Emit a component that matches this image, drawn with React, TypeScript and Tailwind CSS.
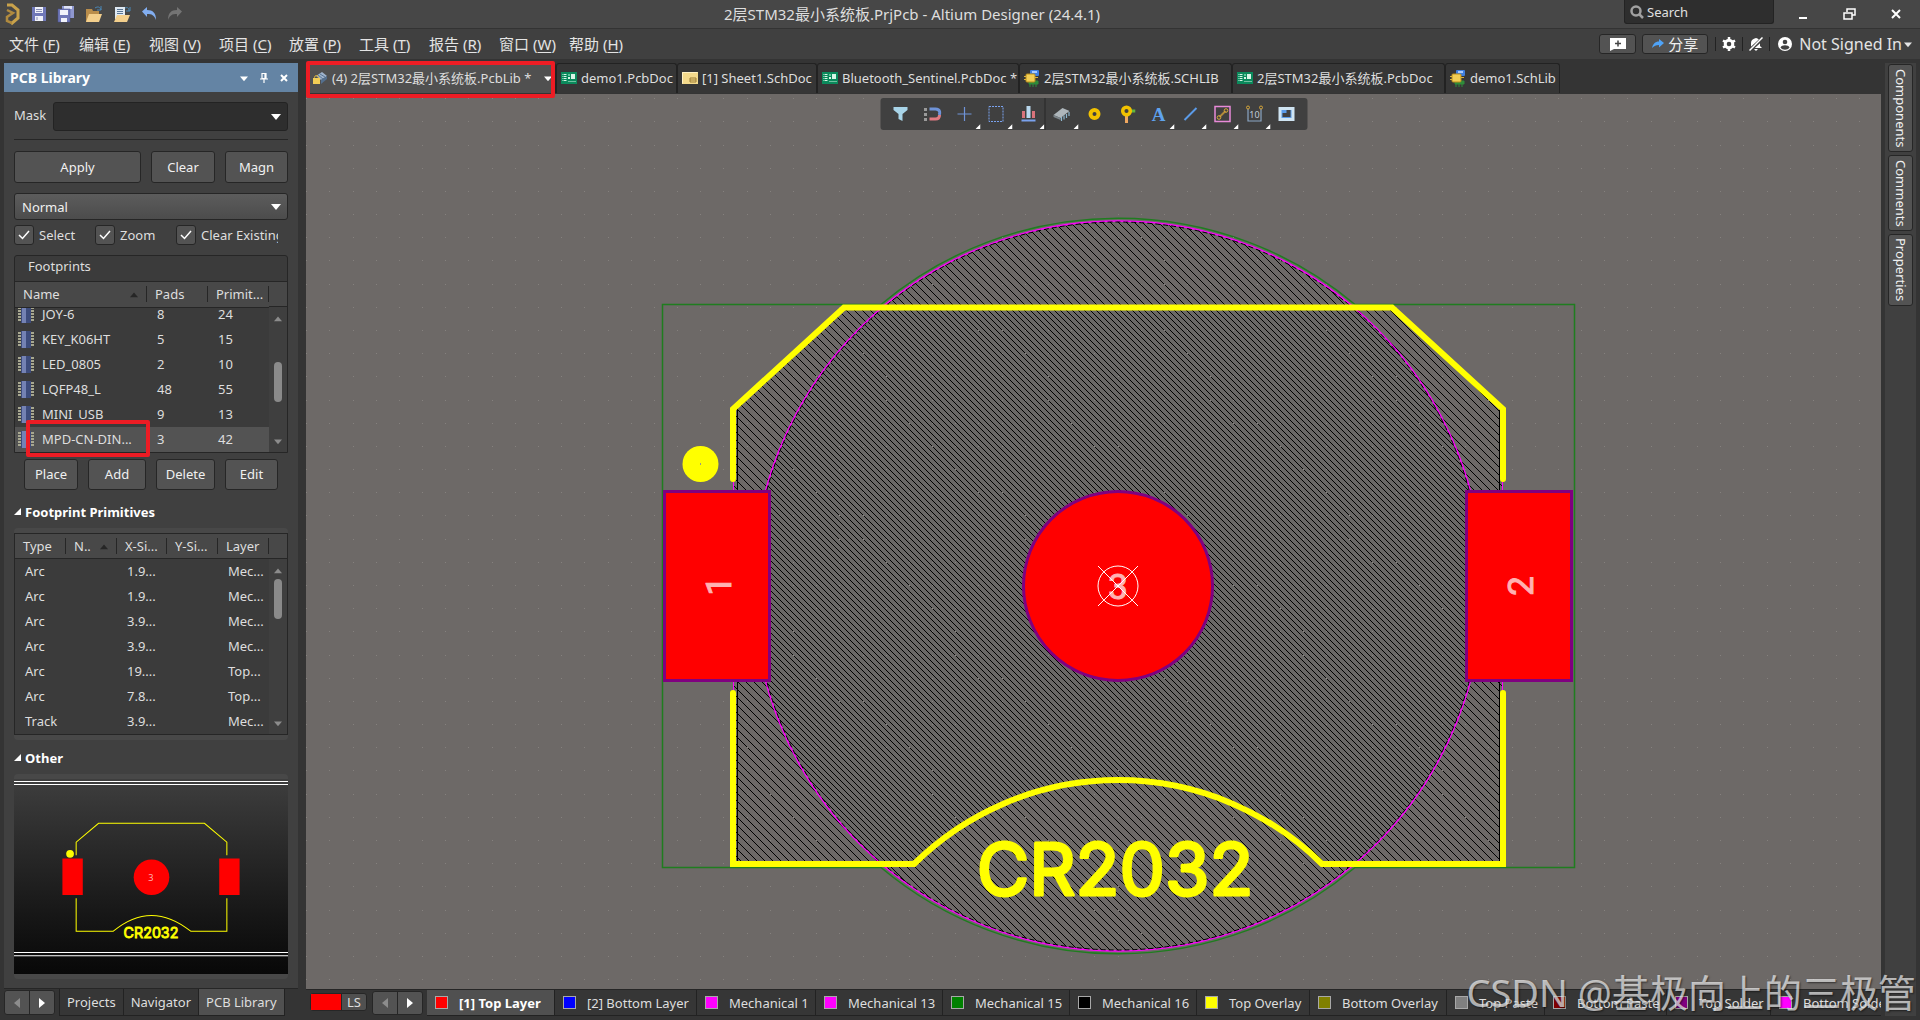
import type { ReactNode } from 'react';
import clsx from 'clsx';

const menus = [
  ['文件', 'F'],
  ['编辑', 'E'],
  ['视图', 'V'],
  ['项目', 'C'],
  ['放置', 'P'],
  ['工具', 'T'],
  ['报告', 'R'],
  ['窗口', 'W'],
  ['帮助', 'H'],
];

const docs = [
  { label: '(4) 2层STM32最小系统板.PcbLib *', kind: 'pcblib', width: 'w-[249px]', active: true },
  { label: 'demo1.PcbDoc', kind: 'pcb', width: 'w-[121px]' },
  { label: '[1] Sheet1.SchDoc', kind: 'sch', width: 'w-[140px]' },
  { label: 'Bluetooth_Sentinel.PcbDoc *', kind: 'pcb', width: 'w-[202px]' },
  { label: '2层STM32最小系统板.SCHLIB', kind: 'schlib', width: 'w-[213px]' },
  { label: '2层STM32最小系统板.PcbDoc', kind: 'pcb', width: 'w-[213px]' },
  { label: 'demo1.SchLib', kind: 'schlib', width: 'w-[115px]' },
];

const footprints = [
  { name: 'JOY-6', pads: 8, primitives: 24 },
  { name: 'KEY_K06HT', pads: 5, primitives: 15 },
  { name: 'LED_0805', pads: 2, primitives: 10 },
  { name: 'LQFP48_L', pads: 48, primitives: 55 },
  { name: 'MINI_USB', pads: 9, primitives: 13 },
  { name: 'MPD-CN-DIN...', pads: 3, primitives: 42 },
];

const primitives = [
  ['Arc', '1.9...', 'Mec...'],
  ['Arc', '1.9...', 'Mec...'],
  ['Arc', '3.9...', 'Mec...'],
  ['Arc', '3.9...', 'Mec...'],
  ['Arc', '19....', 'Top...'],
  ['Arc', '7.8...', 'Top...'],
  ['Track', '3.9...', 'Mec...'],
];

const layers = [
  { label: '[1] Top Layer', color: 'bg-[#ff0000]', width: 'w-[128px]', active: true },
  { label: '[2] Bottom Layer', color: 'bg-[#0000ff]', width: 'w-[142px]' },
  { label: 'Mechanical 1', color: 'bg-[#ff00ff]', width: 'w-[119px]' },
  { label: 'Mechanical 13', color: 'bg-[#ff00ff]', width: 'w-[127px]' },
  { label: 'Mechanical 15', color: 'bg-[#008000]', width: 'w-[127px]' },
  { label: 'Mechanical 16', color: 'bg-black', width: 'w-[127px]' },
  { label: 'Top Overlay', color: 'bg-[#ffff00]', width: 'w-[113px]' },
  { label: 'Bottom Overlay', color: 'bg-[#808000]', width: 'w-[137px]' },
  { label: 'Top Paste', color: 'bg-[#808080]', width: 'w-[98px]' },
  { label: 'Bottom Paste', color: 'bg-[#800000]', width: 'w-[122px]' },
  { label: 'Top Solder', color: 'bg-[#800080]', width: 'w-[104px]' },
  { label: 'Bottom Solder', color: 'bg-[#ff00ff]', width: 'w-[128px]' },
];

const buttonStyle = 'rounded-[3px] border border-[#262626] bg-[#535353] text-[#f0f0f0]';

function Triangle({ dir, className }: { dir: 'up' | 'down' | 'left' | 'right' | 'corner'; className?: string }) {
  const points = {
    up: '0,9 5,3 10,9',
    down: '0,3 10,3 5,9',
    left: '8,0 8,10 2,5',
    right: '2,0 2,10 8,5',
    corner: '10,0 10,10 0,10',
  }[dir];
  return (
    <svg viewBox="0 0 10 10" className={clsx('shrink-0', className)} fill="currentColor">
      <polygon points={points} />
    </svg>
  );
}

function DocIcon({ kind }: { kind: string }) {
  if (kind === 'pcb') {
    return (
      <svg viewBox="0 0 16 12" className="h-3 w-4 shrink-0">
        <rect width="16" height="12" fill="#0b8a5c" />
        <path d="M1.500 2.500h4M1.500 4.500h4M1.500 6.500h4M1.500 8.500h4" stroke="#d8f5e6" strokeDasharray="1 .5 2.500 9" />
        <path d="M7.500 9.500h7" stroke="#d8f5e6" strokeDasharray="1 1" />
        <rect x="10" y="2" width="4" height="5" fill="#d8f5e6" />
        <rect x="7" y="2" width="2" height="2" fill="#5fc79b" />
        <rect x="7" y="5" width="2" height="2" fill="#d8f5e6" />
      </svg>
    );
  }
  if (kind === 'sch') {
    return (
      <svg viewBox="0 0 16 12" className="h-3 w-4 shrink-0">
        <rect width="16" height="12" fill="#f3d98b" />
        <path d="M.5 11.500V.5h15" stroke="#fff1c4" fill="none" />
        <path d="M8 6h6v4H8zM8 8h6" stroke="#9b7d35" fill="none" />
      </svg>
    );
  }
  if (kind === 'schlib') {
    return (
      <svg viewBox="0 0 16 18" className="h-[18px] w-4 shrink-0">
        <rect x="6" y="1" width="9" height="6" rx="1" fill="#3f7fe0" />
        <rect x="8" y="2" width="5" height="2" fill="#a9cbff" />
        <path d="M5 12h9v3H5zM6 15v3M9 15v3M12 15v3" fill="#2e8b3a" stroke="#2e8b3a" />
        <rect x="2" y="5" width="9" height="8" rx="1" fill="#f2ce55" stroke="#b98d1b" />
        <path d="M0 7.500h2M0 10.500h2M11 8.500h3" stroke="#d9b13a" />
      </svg>
    );
  }
  return (
    <svg viewBox="0 0 16 14" className="h-[14px] w-4 shrink-0">
      <path d="M4 5l6-4 5 4-6 4z" fill="#9fb4cd" />
      <path d="M9 9l6-4v3l-6 5z" fill="#54708f" />
      <path d="M6 4l5 4M8 3l5 3" stroke="#5a7694" />
      <path d="M2.500 8V6.500a2 2 0 014 0V8" stroke="#d9b13a" fill="none" />
      <rect x="1" y="7" width="7" height="6" fill="#f2ce55" />
    </svg>
  );
}

function TitleBar() {
  return (
    <header className="relative flex h-[29px] shrink-0 items-center justify-between border-b border-[#333] bg-[#474747]">
      <div className="flex items-center gap-[10px] pl-[5px]">
        <svg viewBox="0 0 16 24" className="h-6 w-4" fill="none" stroke="#c9a24b" strokeWidth="3">
          <path d="M2 3h5l6 5v8l-7 6" />
          <path d="M2 8l6 3-6 4v4l5 2" stroke="#b08a3f" strokeWidth="2.500" />
        </svg>
        <svg viewBox="0 0 16 16" className="size-4">
          <path d="M1 1h14v14H1z" fill="#7078b8" />
          <path d="M4 1h8v6H4zM4 10h8v5H4z" fill="#f0f2fa" />
          <path d="M5 3.500h6M5 5.500h6M6 11v3" stroke="#8a90b8" />
        </svg>
        <svg viewBox="0 0 18 18" className="size-[18px]">
          <path d="M5 1h12v12H5z" fill="#8f97cf" />
          <path d="M7 1h8v3H7z" fill="#dfe3f7" />
          <path d="M1 4h12v13H1z" fill="#7078b8" stroke="#4b5190" strokeWidth=".5" />
          <path d="M3 5h8v5H3zM4 13h6v4H4z" fill="#f0f2fa" />
        </svg>
        <svg viewBox="0 0 18 18" className="size-[18px]">
          <path d="M1 4h6l1 2h6v11H1z" fill="#b98d4b" />
          <path d="M4 9h13l-3 8H1z" fill="#f3cf8c" />
          <path d="M10 3c3-2 5-1 6 2M16 1v4h-4" fill="none" stroke="#4b87b5" />
        </svg>
        <svg viewBox="0 0 18 18" className="size-[18px]">
          <path d="M2 2h10v12H2z" fill="#dfe9f3" />
          <path d="M4 4.500h6M4 6.500h6M4 8.500h6" stroke="#5a7694" />
          <path d="M4 10h13l-3 7H1z" fill="#f3cf8c" />
          <path d="M12 3c3-1 4 0 4 3M17 2v4h-4" fill="none" stroke="#4b87b5" />
        </svg>
        <svg viewBox="0 0 16 16" className="size-4">
          <path d="M1 5.500L6 1v3c6 0 9 3 9 10-2-5-4-6-9-6v3z" fill="#82aef0" />
        </svg>
        <svg viewBox="0 0 16 16" className="size-4">
          <path d="M15 5.500L10 1v3c-6 0-9 3-9 10 2-5 4-6 9-6v3z" fill="#747474" />
        </svg>
      </div>
      <h1 className="absolute inset-x-0 text-center text-[15px] leading-7 text-[#dedede]">
        <span className="pr-[96px]">2层STM32最小系统板.PrjPcb - Altium Designer (24.4.1)</span>
      </h1>
      <div className="relative flex h-full items-start">
        <label className="flex h-6 w-[150px] items-center gap-[2px] rounded-b-[3px] border border-t-0 border-[#232323] bg-[#2e2e2e] pl-1">
          <svg viewBox="0 0 16 16" className="size-4 shrink-0" fill="none" stroke="#a0a0a0" strokeWidth="2.500">
            <circle cx="7" cy="7" r="4.500" />
            <path d="M10 10l4 4" />
          </svg>
          <input type="search" aria-label="Search" placeholder="Search" className="w-full bg-transparent text-[13px] outline-none placeholder:text-[#e0e0e0]" />
        </label>
        <div className="flex h-full w-[146px] items-center justify-between pr-[19px] pl-[25px] text-white">
          <button aria-label="Minimize" className="h-[9px] w-2 border-b-2 border-white" />
          <button aria-label="Restore">
            <svg viewBox="0 0 13 12" className="h-3 w-[13px]" fill="none" stroke="currentColor" strokeWidth="1.500">
              <path d="M4 4V1h8v6H9" />
              <path d="M1 5h8v6H1z" />
            </svg>
          </button>
          <button aria-label="Close">
            <svg viewBox="0 0 10 10" className="size-[10px]" stroke="currentColor" strokeWidth="2">
              <path d="M1 1l8 8M9 1L1 9" />
            </svg>
          </button>
        </div>
      </div>
    </header>
  );
}

function MenuBar() {
  return (
    <nav className="flex h-[30px] shrink-0 items-center justify-between bg-[#404040] pl-[9px] text-[15px] text-[#e4e4e4]">
      <div className="flex">
        {menus.map(([label, key]) => (
          <button key={key} className="w-[70px] text-left whitespace-nowrap">
            {label} (<u className="underline-offset-2">{key}</u>)
          </button>
        ))}
      </div>
      <div className="flex items-center pr-2">
        <button aria-label="Comment" className={clsx(buttonStyle, 'mr-[6px] flex h-5 w-[37px] items-center justify-center')}>
          <svg viewBox="0 0 16 14" className="h-[14px] w-4">
            <path d="M0 1h16v11H4l-4 2z" fill="#fff" />
            <path d="M8 3.500v6M5 6.500h6" stroke="#444" strokeWidth="1.500" />
          </svg>
        </button>
        <button className={clsx(buttonStyle, 'flex h-5 w-[66px] items-center justify-center gap-1 leading-5')}>
          <svg viewBox="0 0 12 10" className="h-[10px] w-3">
            <path d="M12 4L7 0v2.500C3 2.500 1 5 0 9c2-2 4-3 7-3v2.500z" fill="#4fa3f7" />
          </svg>
          分享
        </button>
        <span className="ml-[7px] h-[14px] w-px bg-[#222]" />
        <button aria-label="Settings" className="px-[6px]">
          <svg viewBox="0 0 14 14" className="size-[14px]" fill="none" stroke="#fff">
            <circle cx="7" cy="7" r="3.800" strokeWidth="3" />
            <path d="M7 0v2.500M7 11.500V14M1 3.500l2.200 1.300M10.800 9.200L13 10.500M1 10.500l2.200-1.300M10.800 4.800L13 3.500" strokeWidth="2.500" />
          </svg>
        </button>
        <span className="h-[14px] w-px bg-[#222]" />
        <button aria-label="Notifications" className="px-[6px]">
          <svg viewBox="0 0 14 14" className="size-[14px]">
            <path d="M2 11V6c0-3 2-4 5-5 2 .5 4 2 4 4v4l2 2H2zM5 12h4l-2 2z" fill="#fff" />
            <path d="M0 14L14 1" stroke="#404040" strokeWidth="3.500" />
            <path d="M.5 13.500L13.500 .5" stroke="#fff" strokeWidth="1.500" />
          </svg>
        </button>
        <span className="h-[14px] w-px bg-[#222]" />
        <button className="flex items-center pl-2 text-[16px] whitespace-nowrap">
          <svg viewBox="0 0 14 14" className="mr-[7px] size-[14px]">
            <circle cx="7" cy="7" r="7" fill="#fff" />
            <circle cx="7" cy="5" r="2.300" fill="#404040" />
            <path d="M2.500 10.500c1-3 8-3 9 0-2 3-7 3-9 0z" fill="#404040" />
          </svg>
          Not Signed In
          <Triangle dir="down" className="ml-[2px] size-2" />
        </button>
      </div>
    </nav>
  );
}

function SectionTitle({ children }: { children: ReactNode }) {
  return (
    <h2 className="flex h-5 shrink-0 items-center gap-1 text-[13px] font-bold text-white">
      <Triangle dir="corner" className="size-[7px]" />
      {children}
    </h2>
  );
}

function ScrollBar({ thumb }: { thumb: string }) {
  return (
    <div className="flex w-[18px] flex-col bg-[#3f3f3f] text-[#8c8c8c]">
      <div className="h-[25px] shrink-0 border-b border-[#262626] bg-[#484848]" />
      <div className="flex flex-1 flex-col items-center pt-[7px] pb-[7px]">
        <Triangle dir="up" className="size-2" />
        <div className={clsx('w-2 rounded-full bg-[#8a8a8a]', thumb)} />
        <Triangle dir="down" className="mt-auto size-2" />
      </div>
    </div>
  );
}

function Th({ children, sorted }: { children: ReactNode; sorted?: boolean }) {
  return (
    <th className="h-[25px] border-b border-[#262626] bg-[#484848] p-0 text-left font-normal">
      <div className="flex h-4 items-center justify-between border-r border-[#262626] pl-2 leading-4">
        {children}
        {sorted && <Triangle dir="up" className="mr-2 size-2 text-[#262626]" />}
      </div>
    </th>
  );
}

function ChipIcon() {
  return (
    <svg viewBox="0 0 16 17" className="mr-2 h-[17px] w-4 shrink-0">
      <path d="M2 1v15M14 1v15" stroke="#a8a890" strokeWidth="4" strokeDasharray="2 1" />
      <rect x="3" width="10" height="17" fill="#3d4c7c" />
      <rect x="4" width="4" height="17" fill="#7482b4" />
    </svg>
  );
}

function FootprintTable() {
  return (
    <div className="relative mt-[10px] shrink-0 rounded-t-[3px] border border-[#262626] bg-[#3b3b3b]">
      <div className="h-[26px] border-b border-[#262626] pl-[13px] leading-[21px]">Footprints</div>
      <div className="flex">
        <table className="flex-1 table-fixed border-collapse">
          <colgroup>
            <col className="w-[132px]" />
            <col className="w-[61px]" />
            <col className="w-[61px]" />
          </colgroup>
          <thead>
            <tr>
              <Th sorted>Name</Th>
              <Th>Pads</Th>
              <Th>Primit...</Th>
            </tr>
          </thead>
          <tbody>
            {footprints.map((row, i) => {
              // the list is scrolled, so the first row is cut by the header
              const cell = clsx('flex items-end overflow-hidden leading-[25px] whitespace-nowrap', i === 0 ? 'h-[19px]' : 'h-[25px]');
              return (
                <tr key={row.name} className={clsx(i === 5 && 'bg-[#535353]')}>
                  <td className="p-0">
                    <div className={clsx(cell, 'pl-[3px]')}>
                      <span className="flex h-[25px] items-center">
                        <ChipIcon />
                        {row.name}
                      </span>
                    </div>
                  </td>
                  <td className="p-0">
                    <div className={clsx(cell, 'pl-[10px]')}>{row.pads}</div>
                  </td>
                  <td className="p-0">
                    <div className={clsx(cell, 'pl-[10px]')}>{row.primitives}</div>
                  </td>
                </tr>
              );
            })}
          </tbody>
        </table>
        <ScrollBar thumb="mt-10 h-10" />
      </div>
      <div className="absolute -bottom-[5px] left-[11px] h-[37px] w-[124px] rounded-[2px] border-4 border-[#ed1c24]" />
    </div>
  );
}

function PrimitiveTable() {
  return (
    <div className="mt-[6px] shrink-0 rounded-[4px] bg-[#484848] py-[5px]">
      <div className="flex border border-[#262626] bg-[#3b3b3b]">
        <table className="flex-1 table-fixed border-collapse">
          <colgroup>
            <col className="w-[51px]" />
            <col className="w-[51px]" />
            <col className="w-[50px]" />
            <col className="w-[51px]" />
            <col className="w-[51px]" />
          </colgroup>
          <thead>
            <tr>
              <Th>Type</Th>
              <Th sorted>N..</Th>
              <Th>X-Si...</Th>
              <Th>Y-Si...</Th>
              <Th>Layer</Th>
            </tr>
          </thead>
          <tbody>
            {primitives.map(([type, x, layer], i) => (
              <tr key={i} className="h-[25px]">
                <td className="p-0 pl-[10px]">{type}</td>
                <td />
                <td className="p-0 pl-[10px]">{x}</td>
                <td />
                <td className="p-0 pl-[10px]">{layer}</td>
              </tr>
            ))}
          </tbody>
        </table>
        <ScrollBar thumb="mt-[5px] h-10" />
      </div>
    </div>
  );
}

function Preview() {
  return (
    <div className="mt-[6px] mb-[9px] min-h-0 flex-1 rounded-[4px] bg-[#484848] py-[5px]">
      <svg viewBox="14 781 274 192" preserveAspectRatio="xMidYMid slice" className="size-full bg-linear-to-b from-[#3e3e3e] to-[#080808]">
        <path d="M14 783.500h274M14 786.500h274M14 951.500h274M14 954.500h274" stroke="#fff" />
        <g fill="none" stroke="#ff0">
          <path d="M77.500 856V843L99.500 824.500h104L225.500 843v13M77.500 898v32.500H114q37-31 76 0h35.500V898" />
        </g>
        <circle cx="71.500" cy="854.500" r="3.800" fill="#ff0" />
        <path d="M64 859h20v36H64zM218 859h20v36h-20z" fill="#f00" />
        <circle cx="151.500" cy="877.500" r="17.500" fill="#f00" />
        <text x="151" y="881" fontSize="9" textAnchor="middle" fill="#ffb2b2">3</text>
        <text x="151" y="937" fontSize="14" textAnchor="middle" fill="#ff0" stroke="#ff0" strokeWidth=".8" className="font-[Inter]">
          CR2032
        </text>
      </svg>
    </div>
  );
}

function LibraryPanel() {
  return (
    <aside className="ml-1 flex w-[294px] shrink-0 flex-col">
      <div className="mt-1 flex h-[29px] shrink-0 items-center justify-between bg-[#6484a4] pr-[10px] pl-[6px] text-white">
        <h2 className="text-[14px] font-bold">PCB Library</h2>
        <div className="flex items-center gap-3">
          <button aria-label="Panel menu"><Triangle dir="down" className="size-2" /></button>
          <button aria-label="Pin">
            <svg viewBox="0 0 8 10" className="h-[10px] w-2" fill="none" stroke="currentColor">
              <path d="M2 .5h4v5H2zM5 0v6M0 6h8M4 6v4" strokeWidth="1.200" />
            </svg>
          </button>
          <button aria-label="Close panel">
            <svg viewBox="0 0 8 8" className="size-2" stroke="currentColor" strokeWidth="2">
              <path d="M1 1l6 6M7 1L1 7" />
            </svg>
          </button>
        </div>
      </div>
      <div className="flex min-h-0 flex-1 flex-col bg-[#404040] px-[10px] pt-[10px]">
        <div className="flex h-[29px] shrink-0 items-start">
          <label htmlFor="mask" className="w-[39px] leading-[26px]">Mask</label>
          <div className="relative flex-1">
            <select id="mask" className="h-[29px] w-full appearance-none rounded-[3px] border border-[#232323] bg-[#2e2e2e] px-2">
              <option></option>
            </select>
            <Triangle dir="down" className="pointer-events-none absolute top-[9px] right-[7px] size-[10px] text-white" />
          </div>
        </div>
        <hr className="mt-2 border-[#262626]" />
        <div className="mt-[11px] flex h-8 shrink-0 gap-[10px]">
          <button className={clsx(buttonStyle, 'w-[127px]')}>Apply</button>
          <button className={clsx(buttonStyle, 'w-16')}>Clear</button>
          <button className={clsx(buttonStyle, 'flex-1')}>Magn</button>
        </div>
        <div className="relative mt-[10px] shrink-0">
          <select aria-label="Highlight mode" className="h-[27px] w-full appearance-none rounded-[3px] border border-[#262626] bg-linear-to-b from-[#5c5c5c] to-[#4c4c4c] px-[7px] pt-px text-[#f0f0f0]">
            <option>Normal</option>
          </select>
          <Triangle dir="down" className="pointer-events-none absolute top-2 right-[7px] size-[10px] text-white" />
        </div>
        <div className="mt-[5px] flex h-5 shrink-0 gap-px overflow-hidden pr-[10px] whitespace-nowrap">
          {['Select', 'Zoom', 'Clear Existing'].map((label, i) => (
            <label key={label} className={clsx('flex items-center gap-[5px]', i < 2 ? 'w-20 shrink-0' : 'min-w-0 overflow-hidden')}>
              <span className="relative size-5 shrink-0">
                <input type="checkbox" defaultChecked className="size-5 appearance-none rounded-[3px] border border-[#262626] bg-[#535353]" />
                <svg viewBox="0 0 20 20" className="pointer-events-none absolute inset-0" fill="none" stroke="#fff" strokeWidth="1.500">
                  <path d="M5 10l3.500 3.500L15 6" />
                </svg>
              </span>
              {label}
            </label>
          ))}
        </div>
        <FootprintTable />
        <div className="mt-[6px] flex h-[31px] shrink-0 gap-[10px] px-[10px]">
          <button className={clsx(buttonStyle, 'w-[54px]')}>Place</button>
          <button className={clsx(buttonStyle, 'w-[58px]')}>Add</button>
          <button className={clsx(buttonStyle, 'w-[59px]')}>Delete</button>
          <button className={clsx(buttonStyle, 'flex-1')}>Edit</button>
        </div>
        <div className="h-3 shrink-0" />
        <SectionTitle>Footprint Primitives</SectionTitle>
        <PrimitiveTable />
        <div className="h-2 shrink-0" />
        <SectionTitle>Other</SectionTitle>
        <Preview />
      </div>
      <div className="flex h-8 shrink-0 border-t border-[#262626] pb-1">
        <StepButtons />
        {['Projects', 'Navigator', 'PCB Library'].map((label, i) => (
          <button
            key={label}
            className={clsx('border-r border-b border-[#222] px-[7px] text-[13px] whitespace-nowrap', i === 0 && 'ml-1 border-l', i === 2 ? 'bg-[#505050]' : 'bg-[#363636]')}
          >
            {label}
          </button>
        ))}
      </div>
    </aside>
  );
}

function StepButtons() {
  return (
    <div className="my-px flex w-[51px] shrink-0 divide-x divide-[#262626] rounded-[3px] border border-[#262626] bg-[#535353]">
      <button aria-label="Previous" className="flex flex-1 items-center justify-center text-[#8c8c8c]">
        <Triangle dir="left" className="size-[10px]" />
      </button>
      <button aria-label="Next" className="flex flex-1 items-center justify-center text-white">
        <Triangle dir="right" className="size-[10px]" />
      </button>
    </div>
  );
}

const tools: { name: string; more?: boolean; icon: ReactNode }[] = [
  { name: 'Filter', icon: <path d="M2 2h14v3l-5 4v7l-4-2V9L2 5z" fill="#a8d4e8" /> },
  {
    name: 'Snap',
    icon: (
      <g fill="none" strokeWidth="3">
        <path d="M6 4h6c5 0 5 5 3 6" stroke="#6f93d8" />
        <path d="M6 14h6c2 0 4-1 4-4" stroke="#e07a82" />
        <path d="M2 3v13" stroke="#9a9a9a" strokeDasharray="3 2" />
      </g>
    ),
  },
  { name: 'Origin', more: true, icon: <path d="M9 2v14M2 9h14M7 9h4M9 7v4" stroke="#6f93d8" strokeWidth="1.200" /> },
  { name: 'Select area', more: true, icon: <path d="M1.500 1.500h14v15h-14z" fill="none" stroke="#7aa2ee" strokeDasharray="2 1" /> },
  {
    name: 'Align',
    more: true,
    icon: (
      <g>
        <path d="M2.500 6h3v7h-3zM12.500 6h3v7h-3z" fill="#d9737b" />
        <path d="M7 1h4v12H7z" fill="#b9d8ee" />
        <path d="M2 15.500h14" stroke="#7aa2ee" strokeWidth="2" />
      </g>
    ),
  },
  {
    name: 'Component',
    more: true,
    icon: (
      <g>
        <path d="M1 10l9-7 7 3-9 7z" fill="#aeb6bb" />
        <path d="M1 10l7 3v2l-7-3z" fill="#7d868c" />
        <path d="M9 12v4M11.500 10.500v4M14 9v4M16.500 7v4" stroke="#8fb8cf" strokeWidth="1.200" />
      </g>
    ),
  },
  { name: 'Pad', icon: <circle cx="9" cy="9" r="4" fill="none" stroke="#f2c200" strokeWidth="4" /> },
  {
    name: 'Via',
    icon: (
      <g fill="none">
        <path d="M9 10v8" stroke="#f0a860" strokeWidth="3" />
        <path d="M12 6h6" stroke="#63b53c" strokeWidth="3" />
        <circle cx="9" cy="6" r="3.800" stroke="#f2c200" strokeWidth="3.500" />
      </g>
    ),
  },
  {
    name: 'String',
    more: true,
    icon: (
      <text x="9" y="16" fontSize="19" textAnchor="middle" fill="#5fa3ee" className="font-['Liberation_Serif',serif] font-bold">A</text>
    ),
  },
  { name: 'Line', more: true, icon: <path d="M3 15L15 3" stroke="#5b9be8" strokeWidth="2" /> },
  {
    name: 'Route',
    more: true,
    icon: (
      <g fill="none">
        <path d="M1.500 1.500h15v15h-15z" stroke="#e88ad8" strokeWidth="1.500" />
        <path d="M6 12l6-6" stroke="#b08a3a" strokeWidth="2" />
        <circle cx="5.500" cy="12.500" r="1.800" stroke="#d6a63a" />
        <circle cx="12.500" cy="5.500" r="1.800" stroke="#d6a63a" />
      </g>
    ),
  },
  {
    name: 'Dimension',
    more: true,
    icon: (
      <g fill="none">
        <path d="M2.500 4v12h13V4" stroke="#8aa6c4" strokeWidth="1.200" />
        <circle cx="2.500" cy="2.500" r="1.500" stroke="#d6a63a" />
        <circle cx="15.500" cy="2.500" r="1.500" stroke="#d6a63a" />
        <text x="9" y="13" fontSize="9" textAnchor="middle" fill="#c0ccd8">10</text>
      </g>
    ),
  },
  {
    name: 'Room',
    icon: (
      <g>
        <path d="M1 2h16v14H1z" fill="#cfe4f2" />
        <path d="M4 5h10v8H4z" fill="#5b9be8" />
        <path d="M5 8h4V5h4v7H5z" fill="#404040" />
      </g>
    ),
  },
];

function Toolbar() {
  return (
    <div className="absolute top-1 left-1/2 flex h-8 w-[427px] -translate-x-1/2 rounded-[3px] bg-[#404040] pl-1">
      {tools.map(tool => (
        <button
          key={tool.name}
          aria-label={tool.name}
          className={clsx('relative flex items-center justify-center', tool.name === 'Component' ? 'w-[34px] border-l border-[#262626]' : 'w-8')}
        >
          <svg viewBox="0 0 18 18" className="size-[18px]">{tool.icon}</svg>
          {tool.more && <Triangle dir="corner" className="absolute right-0 bottom-[1px] size-[5px] text-white" />}
        </button>
      ))}
    </div>
  );
}

const GRID = 23.18;
const CENTER = { x: 1118, y: 585.5 };

function gridDots() {
  let d = '';
  for (let i = -36; i <= 34; i++) {
    for (let j = -22; j <= 18; j++) {
      d += `M${Math.floor(CENTER.x + i * GRID)} ${Math.floor(CENTER.y + j * GRID) + 0.5}h1`;
    }
  }
  return d;
}

const body = 'M733 409L844 307.500H1392L1503 409V864H1322A290 290 0 00914 864H733z';

function Hatch({ id, step }: { id: string; step: number }) {
  return (
    <pattern id={id} width={step} height={step} patternUnits="userSpaceOnUse">
      {Array.from({ length: step }, (_, n) => (
        <rect key={n} x={n} y={n} width="1" height="1" />
      ))}
    </pattern>
  );
}

function Canvas() {
  return (
    <div className="relative min-h-0 flex-1 overflow-hidden bg-[#6d6967]">
      <svg viewBox="306 94 1575 895" preserveAspectRatio="xMidYMid slice" className="absolute inset-0 size-full">
        <defs>
          <Hatch id="hatch-wide" step={8} />
          <Hatch id="hatch-tight" step={6} />
          <clipPath id="cell">
            <circle cx="1118" cy="586" r="364" />
          </clipPath>
        </defs>
        {/* courtyard */}
        <g fill="none" stroke="#1f7d1f" strokeWidth="1.500">
          <path d="M881 304.500H662.500V867.500H881A368.500 368.500 0 001355 867.500H1574.500V304.500H1355A368.500 368.500 0 00881 304.500" />
        </g>
        {/* mechanical bodies */}
        <circle cx="1118" cy="586" r="365" fill="url(#hatch-wide)" />
        <path d={body} fill="url(#hatch-wide)" />
        <g clipPath="url(#cell)">
          <path d={body} fill="#6a6866" />
          <path d={body} fill="url(#hatch-tight)" />
        </g>
        <circle cx="1118" cy="586" r="365" fill="none" stroke="#f0f" strokeWidth="1.500" />
        <circle cx="1118" cy="586" r="364" fill="none" stroke="#000" strokeDasharray="5 3" />
        <path d="M733.500 470V700M1502.500 470V700" stroke="#f0f" />
        <path d="M737.500 408V862M1499.500 408V862" stroke="#000" />
        <path d={gridDots()} stroke="#85817e" />
        {/* overlay */}
        <g fill="none" stroke="#ff0" strokeWidth="6" strokeLinecap="round">
          <path d="M733 479V409L844 307.500H1392L1503 409V479" />
          <path d="M733 693V864H914A290 290 0 011322 864H1503V693" />
        </g>
        <circle cx="700.500" cy="464" r="18" fill="#ff0" />
        <rect x="700" y="463" width="1" height="2" fill="#998" />
        <text x="1115" y="895" fontSize="72" textAnchor="middle" fill="#ff0" stroke="#ff0" strokeWidth="3" strokeLinejoin="round" className="font-[Inter]">
          CR2032
        </text>
        {/* pads */}
        <g fill="#f00" stroke="#800080" strokeWidth="3">
          <rect x="664.500" y="491.500" width="105" height="189" />
          <rect x="1466.500" y="491.500" width="105" height="189" />
          <circle cx="1118" cy="586" r="94.500" />
        </g>
        <g fill="#ffb2b2" stroke="#ffb2b2" fontSize="35" textAnchor="middle" className="font-[Roboto]">
          <text transform="translate(731 586) rotate(-90)">1</text>
          <text transform="translate(1533 586) rotate(-90)">2</text>
          <text x="1118" y="599">3</text>
        </g>
        <g fill="none" stroke="#fff">
          <circle cx="1118" cy="586" r="20" />
          <path d="M1098 566l40 40M1138 566l-40 40" />
        </g>
      </svg>
      <Toolbar />
    </div>
  );
}

function DocTabs() {
  return (
    <div className="relative mt-1 flex h-[31px] shrink-0 pl-px">
      {docs.map(doc => (
        <button
          key={doc.label}
          className={clsx(
            'flex h-[30px] shrink-0 items-center gap-1 overflow-hidden rounded-t-[3px] border border-b-0 border-[#222] pb-px pl-1 whitespace-nowrap text-[#dedede]',
            doc.width,
            doc.active ? 'bg-[#505050]' : 'bg-[#363636]',
          )}
        >
          <DocIcon kind={doc.kind} />
          {doc.label}
          {doc.active && <Triangle dir="down" className="mr-[3px] ml-auto size-2 text-white" />}
        </button>
      ))}
      <div className="pointer-events-none absolute -top-[2px] left-0 z-10 h-[37px] w-[249px] rounded-[2px] border-4 border-[#ed1c24]" />
    </div>
  );
}

function LayerBar() {
  return (
    <div className="flex h-[31px] shrink-0 overflow-hidden border-t border-[#262626] pb-1 pl-1">
      <button className="mt-[3px] flex h-[18px] w-[57px] shrink-0 items-center rounded-[3px] border border-[#262626] bg-[#505050]">
        <span className="h-full w-[31px] border-r border-[#262626] bg-[#ff0000]" />
        <span className="flex-1 text-center leading-4">LS</span>
      </button>
      <div className="ml-[5px] flex">
        <StepButtons />
      </div>
      <div className="ml-1 flex">
        {layers.map(layer => (
          <button
            key={layer.label}
            className={clsx(
              'flex shrink-0 items-center gap-[11px] border-r border-b border-[#222] pl-2 whitespace-nowrap',
              layer.width,
              layer.active ? 'bg-[#505050] font-bold text-white' : 'bg-[#363636]',
            )}
          >
            <span className={clsx('size-[13px] shrink-0 border border-[#a8a8a8]', layer.color)} />
            {layer.label}
          </button>
        ))}
      </div>
    </div>
  );
}

export default function App() {
  return (
    <div className="relative flex h-screen flex-col overflow-hidden bg-[#343434] font-['Noto_Sans','Noto_Sans_CJK_SC',sans-serif] text-[13px] leading-5 text-[#dedede]">
      <TitleBar />
      <MenuBar />
      <div className="flex min-h-0 flex-1">
        <LibraryPanel />
        <main className="ml-2 flex min-w-0 flex-1 flex-col">
          <DocTabs />
          <Canvas />
          <LayerBar />
        </main>
        <div className="mt-1 mr-1 mb-1 ml-1 flex w-[31px] shrink-0 flex-col items-center gap-[3px] bg-[#404040] pt-px">
          {[
            ['Components', 'h-[88px]'],
            ['Comments', 'h-[76px]'],
            ['Properties', 'h-[72px]'],
          ].map(([label, height]) => (
            <button key={label} className={clsx(buttonStyle, 'w-[25px] text-center whitespace-nowrap [writing-mode:vertical-rl]', height)}>
              {label}
            </button>
          ))}
        </div>
      </div>
      <div className="pointer-events-none absolute right-1 bottom-2 text-[38px] leading-10 whitespace-nowrap text-white/65 [text-shadow:1px_1px_2px_#0008]">
        CSDN @基极向上的三极管
      </div>
    </div>
  );
}
